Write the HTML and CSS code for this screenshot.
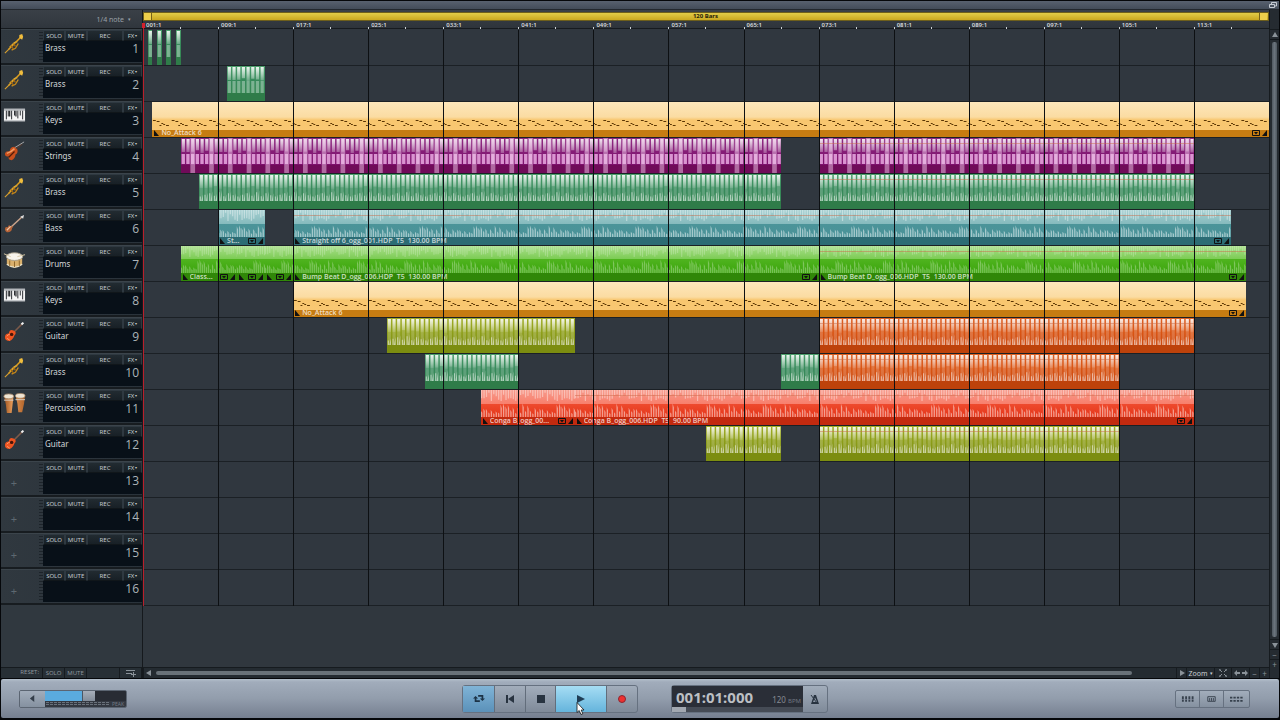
FILE: index.html
```html
<!DOCTYPE html>
<html lang="en">
<head>
<meta charset="utf-8">
<title>Arranger</title>
<link rel="stylesheet" href="styles.css">
</head>
<body>
<svg class="defs" aria-hidden="true">
  <defs>
    <linearGradient id="gold" x1="0" y1="0" x2="1" y2="1"><stop offset="0" stop-color="#f5c84a"/><stop offset="1" stop-color="#a96a08"/></linearGradient>
    <linearGradient id="skin" x1="0" y1="0" x2="1" y2="0"><stop offset="0" stop-color="#9a5220"/><stop offset=".4" stop-color="#e69a58"/><stop offset="1" stop-color="#b0632a"/></linearGradient>
    <linearGradient id="shade" x1="0" y1="0" x2="0" y2="1"><stop offset="0" stop-color="#fff" stop-opacity=".9"/><stop offset="1" stop-color="#fff" stop-opacity=".25"/></linearGradient>
    <symbol id="i-brass" viewBox="0 0 24 24">
      <path d="M2 22 L7 17" stroke="#d8a030" stroke-width="1.200"/>
      <path d="M6 18 L19 5" stroke="#e0a01e" stroke-width="1.600"/>
      <path d="M17 6 L17 3 L20 2 L21 5 L20 8 Z" fill="#f0bd3e"/>
      <path d="M7 16 L12 11 L15 10 M9 19 L13 17 L16 12" fill="none" stroke="url(#gold)" stroke-width="1.400"/>
      <path d="M8 14 L11 18 M11 12 L13 15" stroke="#a8690c" stroke-width="1.300"/>
    </symbol>
    <symbol id="i-keys" viewBox="0 0 24 24">
      <rect x="1" y="5" width="22" height="13" fill="#f4f4f4"/><path d="M1 5h22v2H1zM1 17h22v1H1z" fill="#b4b8bc"/>
      <path d="M3.500 7v9M5.500 7v6M9 7v9M12 7v5M15.500 7v8M18 7v5M20.500 7v9" stroke="#22262a" stroke-width="1"/>
      <path d="M7 7v6M13.500 7v6" stroke="#15171a" stroke-width="1.200"/>
    </symbol>
    <symbol id="i-strings" viewBox="0 0 24 24">
      <path d="M11 12 L20 4" stroke="#4a3a34" stroke-width="1.800"/><path d="M9 10 L22 2" stroke="#a7a9ab" stroke-width="1"/>
      <path d="M2 14 Q3 11 7 12 Q7 7 12 7 L15 10 Q16 14 13 15 Q13 19 9 21 Q5 21 6 17 Q2 18 2 14Z" fill="#c9501d"/>
      <path d="M4 14 Q8 13 12 9" stroke="#f19c63" stroke-width="1.500" fill="none"/><path d="M6 18 L12 12" stroke="#4e1c0a" stroke-width="1.200"/>
    </symbol>
    <symbol id="i-bass" viewBox="0 0 24 24">
      <path d="M7 17 L20 5" stroke="#c9a48c" stroke-width="1.600"/><path d="M18 5 L22 3 L21 7Z" fill="#dcdcdc"/>
      <path d="M2 18 Q2 15 5 16 Q6 12 8 15 L11 15 Q9 16 9 19 Q7 22 4 21 Q2 20 2 18Z" fill="#b46237"/><path d="M4 19 L8 15" stroke="#efc6a5" stroke-width="1.300"/>
    </symbol>
    <symbol id="i-drums" viewBox="0 0 24 24">
      <path d="M4 9v8q8 6 16 0V9z" fill="#d9b06c"/><ellipse cx="12" cy="9" rx="8.500" ry="4" fill="#f7f4ec" stroke="#a9a08b"/>
      <path d="M4 17q8 6 16 0" fill="none" stroke="#eee3c6" stroke-width="1.500"/><path d="M7 13v6M12 14v6M17 13v6" stroke="#8c642a" stroke-width="1"/>
      <path d="M1 6L8 9M23 7L15 9" stroke="#d7c9a6" stroke-width="1"/>
    </symbol>
    <symbol id="i-guitar" viewBox="0 0 24 24">
      <path d="M11 13 L20 4" stroke="#7b5a4a" stroke-width="1.600"/><path d="M18.500 4l2-2 1.500 1.500-2 2z" fill="#f0f0f0"/>
      <path d="M2 18 Q2 14 6 14 Q7 9 11 11 Q15 13 12 16 Q11 20 7 22 Q2 22 2 18Z" fill="#ee5420"/><circle cx="9" cy="15" r="1.800" fill="#4a1408"/>
      <path d="M4 19l3 2M4 17q1-2 3-2" stroke="#ff9a6a" stroke-width="1" fill="none"/>
    </symbol>
    <symbol id="i-perc" viewBox="0 0 24 24">
      <path d="M1 4h10l-1 9-1 9H4L3 13zM13 3h10l-1 9-2 9h-4l-1-9z" fill="url(#skin)"/>
      <ellipse cx="6" cy="4.500" rx="5" ry="2.500" fill="#eee4d3" stroke="#a9896a" stroke-width=".8"/><ellipse cx="18" cy="4" rx="5" ry="2.500" fill="#eee4d3" stroke="#a9896a" stroke-width=".8"/>
      <path d="M1 8.500h10M13 8h10" stroke="#d8cfc4" stroke-width="1"/>
    </symbol>
  </defs>
</svg>

<div class="app">
  <header class="titlebar"><button class="restore" aria-label="Restore window"><svg viewBox="0 0 10 8"><path d="M3.500 3V1.500h5V5H7M1.500 3.500h5v3h-5z" fill="none" stroke="#c5cad2"/></svg></button></header>

  <main class="workspace">
    <section class="tracks" aria-label="Tracks">
      <div class="snap"><button class="snap-btn">1/4 note <span class="caret">▾</span></button></div>
      <div id="heads"></div>
      <div class="filler"></div>
      <div class="reset-row">
        <span class="reset-label">RESET:</span><button>SOLO</button><button>MUTE</button><span class="blank"></span>
        <button aria-label="Add track"><svg viewBox="0 0 12 8"><path d="M1 1.500h9M1 4.500h6M6 5.500h5M8.500 3v5" stroke="#8a9299" fill="none"/></svg></button>
      </div>
    </section>

    <section class="timeline" aria-label="Arrangement">
      <div class="ruler">
        <div class="loop"><span class="grip"></span><span>120 Bars</span><span class="grip end"></span></div>
        <div class="marks" id="marks"></div>
      </div>
      <div class="lanes" id="lanes"></div>
      <div class="filler"></div>
      <div class="hscroll">
        <button class="arrow" aria-label="Scroll left"><svg viewBox="0 0 6 6"><path d="M5 0v6L0 3z" fill="#8a9299"/></svg></button>
        <div class="track"><span class="thumb"></span></div>
        <button class="arrow" aria-label="Scroll right"><svg viewBox="0 0 6 6"><path d="M1 0v6l5-3z" fill="#8a9299"/></svg></button>
        <button class="zoom">Zoom <span class="caret">▾</span></button>
        <button class="fit" aria-label="Fit"><svg viewBox="0 0 8 8"><path d="M0 2V0h2M6 0h2v2M8 6v2H6M2 8H0V6M1 1l2 2M7 1L5 3M1 7l2-2M7 7L5 5" stroke="#8a9299" fill="none"/></svg></button>
        <button class="wide" aria-label="Fit width"><svg viewBox="0 0 14 6"><path d="M0 3l3-3v2h3v2H3v2zM14 3l-3-3v2H8v2h3v2z" fill="#8a9299"/></svg></button>
        <button class="step">−</button><button class="step">+</button>
      </div>
    </section>

    <aside class="vscroll">
      <button aria-label="Scroll up"><svg viewBox="0 0 6 6"><path d="M0 5h6L3 0z" fill="#8a9299"/></svg></button>
      <div class="track"><span class="thumb"></span></div>
      <button aria-label="Scroll down"><svg viewBox="0 0 6 6"><path d="M0 1h6L3 6z" fill="#8a9299"/></svg></button>
      <button>−</button><button>+</button>
    </aside>
  </main>

  <footer class="transport">
    <div class="volume">
      <button class="speaker" aria-label="Mute output"><svg viewBox="0 0 8 8"><path d="M6 0v8L1 4z" fill="#333d49"/></svg></button>
      <div class="level"><input type="range" min="0" max="100" value="54" aria-label="Volume"><div class="meter"><span class="dots"></span><span>PEAK</span></div></div>
    </div>
    <div class="center">
      <div class="buttons">
        <button class="loop-btn" aria-label="Loop"><svg viewBox="0 0 14 10"><path d="M0 5L3 2l3 3H4v2h4v2H2V5zM14 5l-3 3-3-3h2V3H6V1h6v4z" fill="#1c3346"/></svg></button>
        <button aria-label="To start"><svg viewBox="0 0 10 10"><path d="M1 1h2v8H1zM9 1v8L3 5z" fill="#283340"/></svg></button>
        <button aria-label="Stop"><svg viewBox="0 0 10 10"><path d="M1 1h8v8H1z" fill="#283340"/></svg></button>
        <button class="play" aria-label="Play"><svg viewBox="0 0 10 10"><path d="M1 1v8l8-4z" fill="#1f3d55"/></svg></button>
        <button aria-label="Record"><svg viewBox="0 0 10 10"><circle cx="5" cy="5" r="3.500" fill="#ee3030" stroke="#8b2630"/></svg></button>
        <svg class="cursor" viewBox="0 0 9 13"><path d="M1 .5v10l2.200-2 1.800 4 1.800-.8L5.200 8H8z" fill="#fff" stroke="#111" stroke-width=".8"/></svg>
      </div>
      <div class="clock">
        <div class="display">
          <div class="readout"><span class="time">001:01:000</span><span class="bpm">120 <small>BPM</small></span></div>
          <div class="seek"><span></span></div>
        </div>
        <button aria-label="Metronome"><svg viewBox="0 0 10 12"><path d="M4 2h2l3 9H1z M5 4.500L3 9h4z" fill="#283340" fill-rule="evenodd"/><path d="M1 2l6 8" stroke="#283340"/></svg></button>
      </div>
    </div>
    <div class="views">
      <button aria-label="Keyboard"><svg viewBox="0 0 14 8"><path d="M1 1h2v6H1zM4.500 1h2v6h-2zM8 1h2v6H8zM11.500 1h2v6h-2z" fill="#37414d"/><path d="M0 4.500h14" stroke="#8d97a6" stroke-width=".6"/></svg></button>
      <button aria-label="Mixer"><svg viewBox="0 0 14 8"><path d="M3 1.500h8v5H3zM5 3v3M7 3v3M9 3v3" fill="none" stroke="#37414d"/></svg></button>
      <button aria-label="Media"><svg viewBox="0 0 14 8"><path d="M0 2.500h14M0 6h14" stroke="#37414d" stroke-width="2" stroke-dasharray="2.500 1.200"/></svg></button>
    </div>
  </footer>
</div>
<script src="app.js"></script>
</body>
</html>
```

FILE: styles.css
```css
* { box-sizing: border-box; }
body { margin: 0; background: #05070a; font-family: "Noto Sans", "Open Sans", sans-serif; color: #c9ced3; }
button { margin: 0; padding: 0; border: 0; background: none; color: inherit; font: inherit; display: flex; align-items: center; justify-content: center; }
svg { display: block; }
.defs { position: absolute; width: 0; height: 0; }

.app { min-height: 100vh; display: flex; flex-direction: column; padding: 1px 1px 2px; }
.titlebar { height: 8px; display: flex; justify-content: flex-end; background: linear-gradient(#58616f, #434c59); padding-right: 1px; }
.restore svg { width: 10px; height: 8px; }

.workspace { flex: 1; display: grid; grid-template-columns: 142px 1fr 10px; background: #30373e; border-top: 1px solid #23282e; }
.tracks, .timeline, .vscroll { display: flex; flex-direction: column; min-width: 0; }
.filler { flex: 1; }

/* track heads */
.tracks { background: #30383f; border-right: 1px solid #15191d; }
.snap { height: 19px; background: linear-gradient(#3a4047, #30363d); border-bottom: 1px solid #15191d; display: flex; justify-content: flex-end; padding-right: 11px; }
.snap-btn { font-size: 7px; color: #9ba1a8; gap: 4px; }
.caret { font-size: 5px; }
.head { height: 36px; display: flex; border-bottom: 2px solid #171c20; border-top: 1px solid #3b444b; background: linear-gradient(90deg, #30383f, #29323a); padding-bottom: 1px; }
.pic { width: 26px; margin: 0 12px 5px 0; display: flex; align-items: center; justify-content: center; }
.pic svg { width: 23px; height: 23px; }
.pic.empty { color: #5d6870; font-size: 11px; margin: 8px 12px 0 0; }
.drag { width: 4px; margin: 2px 0; background: repeating-linear-gradient(#1d242a 0 1px, transparent 1px 3px); }
.panel { flex: 1; background: #081018; display: flex; flex-direction: column; }
.keys { display: grid; grid-template-columns: 22px 22px 36px 1fr; height: 11px; }
.keys button { background: linear-gradient(#222b31, #182026); border: 1px solid #2f3941; border-bottom-color: #10161a; font-size: 6px; line-height: 8px; color: #c4cace; gap: 1px; }
.keys .caret { font-size: 4px; }
.title { display: flex; justify-content: space-between; padding: 0 3px 0 2px; }
.name { font-size: 8px; line-height: 13px; color: #d4d8da; }
.num { font-family: "Open Sans", sans-serif; font-size: 12px; line-height: 15px; color: #adb4b9; }
.reset-row { height: 11px; display: grid; grid-template-columns: 42px 22px 22px 33px 1fr; font-size: 6px; line-height: 9px; color: #8b949b; background: #272f35; border-top: 1px solid #161b1f; }
.reset-row > * { border-right: 1px solid #161b1f; }
.reset-label { text-align: right; padding-right: 3px; }
.reset-row svg { width: 12px; height: 8px; }

/* ruler */
.ruler { height: 19px; padding-top: 2px; background: linear-gradient(#3a4047, #2e343b); border-bottom: 1px solid #171b1f; }
.loop { height: 9px; display: flex; justify-content: space-between; align-items: center; background: linear-gradient(#e2cc48, #c9a720); border: 1px solid #6e5f1c; font-size: 6px; font-weight: 700; line-height: 7px; color: #282309; padding-right: 1px; }
.grip { width: 8px; height: 7px; background: #edcf4b; border-right: 1px solid #75621a; }
.grip.end { border-right: 0; border-left: 1px solid #75621a; }
.marks { display: grid; grid-template-columns: repeat(15, 1fr); height: 8px; }
.mark { font-size: 6px; font-weight: 600; line-height: 8px; color: #d5d9dd; padding-left: 3px; background: linear-gradient(#cbd0d5, #cbd0d5) left bottom / 1px 2px no-repeat, linear-gradient(#cbd0d5, #cbd0d5) center bottom / 1px 2px no-repeat; }

/* lanes */
.lanes { position: relative; border-top: 1px solid #30373f; }
.lane { position: relative; height: 36px; border-bottom: 1px solid #1b2025; background: #30373f; }
.grid { position: absolute; inset: 0; display: grid; grid-template-columns: repeat(15, 1fr); pointer-events: none; }
.grid span + span { border-left: 1px solid #0d1013; }
.playhead { position: absolute; top: -7px; bottom: 0; left: 0; width: 1px; background: #b9202c; }
.playhead::before { content: ""; position: absolute; top: 0; left: -1px; width: 3px; height: 5px; background: #d4202c; }
.clip { position: absolute; top: 0; height: 35px; overflow: hidden; }
.wave { position: absolute; inset: 0; width: 100%; height: 100%; }
.tag { position: absolute; left: 0; right: 0; bottom: 0; height: 8px; display: flex; align-items: center; gap: 2px; padding: 0 2px; font-family: "Open Sans", sans-serif; font-size: 7px; font-weight: 600; line-height: 8px; white-space: pre; color: rgba(255, 255, 255, .75); }
.tag .text { flex: 1; min-width: 0; overflow: hidden; }
.tag svg { flex: none; height: 6px; }
.tri { width: 5px; }
.menu { width: 8px; }

.clip-green, .clip-mint { background: linear-gradient(#4c9e6c 0, #36895a 15px, #368955 27px, #2f7c49 27px); }
.clip-purple { background: linear-gradient(#8e2a82 0, #7d0f6c 27px, #700b59 27px); }
.clip-teal { background: linear-gradient(#a5cfd1 0, #85babd 14px, #4b9499 14px, #4a9298 27px, #2c6c74 27px); }
.clip-lime { background: linear-gradient(#aadf8c 0, #7ccc54 13px, #50b41f 13px, #3ba40c 27px, #308708 27px); }
.clip-keys { background: linear-gradient(#fde6bb 0, #fbdca2 15px, #f8c66e 18px, #f9c873 28px, #c67c12 28px); }
.clip-olive { background: linear-gradient(#a0ad28 0, #8d9e18 14px, #7f9014 27px, #7c8d10 27px); }
.clip-orange { background: linear-gradient(#dc6024 0, #d95413 14px, #cc480e 27px, #bd420b 27px); }
.clip-red { background: linear-gradient(#f79a8b 0, #f87f6c 14px, #ee4a2e 14px, #e43619 27px, #c32a0f 27px); }

/* scroll bars */
.hscroll { height: 11px; display: flex; align-items: stretch; background: #242b31; border-top: 1px solid #161b1f; }
.hscroll button { border-left: 1px solid #161b1f; }
.arrow { width: 10px; }
.arrow svg, .vscroll svg { width: 6px; height: 6px; }
.hscroll .track { flex: 1; padding: 3px 3px; }
.hscroll .thumb { display: block; width: 96%; height: 4px; border-radius: 2px; background: #697279; }
.zoom { width: 28px; font-size: 7px; gap: 2px; }
.fit { width: 17px; } .fit svg { width: 8px; height: 8px; }
.wide { width: 18px; } .wide svg { width: 14px; height: 6px; }
.step { width: 10px; font-size: 8px; line-height: 9px; color: #8a9299; }
.vscroll { background: #252b31; border-left: 1px solid #161b1f; padding: 19px 0 9px; }
.vscroll .track { flex: 1; padding: 2px 2px 2px; display: flex; border-top: 1px solid #11161a; }
.vscroll .thumb { flex: 1; border-radius: 2px; background: linear-gradient(90deg, #505961, #6a737c, #505961); }
.vscroll button { height: 10px; font-size: 8px; line-height: 8px; color: #8a9299; border-top: 1px solid #161b1f; }

/* transport */
.transport { margin-top: 1px; height: 39px; display: grid; grid-template-columns: 1fr auto 1fr; align-items: center; padding: 0 8px 0 18px; background: linear-gradient(#b3bfcb 0, #a1acbb 3px, #929dac 50%, #757f90); border-radius: 2px; }
.volume { display: flex; width: 108px; height: 18px; border: 1px solid #5b6572; border-radius: 2px; overflow: hidden; }
.speaker { width: 25px; background: linear-gradient(#a2adbb, #8591a0); }
.speaker svg { width: 7px; height: 7px; }
.level { flex: 1; background: #333841; display: flex; flex-direction: column; }
.level input { appearance: none; width: 100%; height: 10px; margin: 0; background: linear-gradient(90deg, #5aabde 50%, #282c34 50%); }
.level input::-webkit-slider-thumb { appearance: none; width: 13px; height: 10px; background: linear-gradient(#a7afba, #838d9a); border: 0; border-left: 1px solid #4b5663; }
.meter { display: flex; align-items: center; gap: 2px; font-size: 5px; line-height: 6px; color: #737b85; padding: 0 2px 0 1px; }
.dots { flex: 1; height: 5px; background: repeating-linear-gradient(#333841 0 1px, transparent 1px 2px), repeating-linear-gradient(90deg, #69717b 0 3px, #333841 3px 4px); }
.center { display: flex; gap: 33px; }
.buttons { position: relative; display: grid; grid-template-columns: 31px 31px 30px 51px 31px; height: 28px; border: 1px solid #667180; border-radius: 3px; background: linear-gradient(#a2adbb, #7f8a99); }
.buttons button + button { border-left: 1px solid #626d7b; }
.buttons button svg { width: 10px; height: 10px; }
.buttons .loop-btn { background: linear-gradient(#80b4d7, #5b91b9); }
.buttons .loop-btn svg { width: 12px; height: 9px; }
.buttons .play { background: linear-gradient(#a6ddf4, #65b4dc); }
.cursor { position: absolute; left: 113px; top: 16px; width: 9px; height: 13px; }
.clock { display: flex; height: 28px; border: 1px solid #667180; border-radius: 3px; background: linear-gradient(#a2adbb, #7f8a99); }
.clock > button { width: 24px; }
.clock > button svg { width: 10px; height: 12px; }
.display { width: 131px; background: #2a2e37; display: flex; flex-direction: column; }
.readout { flex: 1; display: flex; justify-content: space-between; align-items: center; padding: 1px 2px 0 4px; }
.time { font-size: 15px; line-height: 20px; font-weight: 700; color: #bcbfc3; }
.bpm { font-size: 8px; padding-top: 6px; color: #858a92; }
.bpm small { font-size: 6px; color: #727882; }
.seek { height: 5px; background: #454b55; }
.seek span { display: block; width: 14px; height: 5px; background: #a2a8b1; }
.views { justify-self: end; margin-right: 21px; display: flex; height: 18px; border: 1px solid #667180; border-radius: 2px; background: linear-gradient(#a2adbb, #8591a0); }
.views button { width: 24px; border-right: 1px solid #667180; }
.views button:last-child { width: 25px; border-right: 0; }
.views svg { width: 13px; height: 8px; }
```

FILE: app.js
```js
const BARS = 120;
// each clip: kind, first bar, last bar, label, automation line
const BASS_LOOP = "Straight off 6_ogg_001.HDP  T5  130.00 BPM";
const DRUM_LOOP = "Bump Beat D_ogg_006.HDP  T5  130.00 BPM";
const tracks = [
  ["Brass", "brass", [["mint", .5, 1], ["mint", 1.5, 2], ["mint", 2.5, 3], ["mint", 3.5, 4]]],
  ["Brass", "brass", [["mint", 9, 13]]],
  ["Keys", "keys", [["keys", 1, 120, "No_Attack 6"]]],
  ["Strings", "strings", [["purple", 4, 68], ["purple", 72, 112, "", 1]]],
  ["Brass", "brass", [["green", 6, 68], ["green", 72, 112, "", 1]]],
  ["Bass", "bass", [["teal", 8, 13, "St..."], ["teal", 16, 116, BASS_LOOP, 1]]],
  ["Drums", "drums", [["lime", 4, 10, "Class..."], ["lime", 10, 13, " "], ["lime", 13, 16, " "], ["lime", 16, 72, DRUM_LOOP], ["lime", 72, 117.5, DRUM_LOOP, 1]]],
  ["Keys", "keys", [["keys", 16, 117.5, "No_Attack 6"]]],
  ["Guitar", "guitar", [["olive", 26, 46], ["orange", 72, 112, "", 1]]],
  ["Brass", "brass", [["green", 30, 40], ["green", 68, 72], ["orange", 72, 104, "", 1]]],
  ["Percussion", "perc", [["red", 36, 46, "Conga B_ogg_00..."], ["red", 46, 112, "Conga B_ogg_006.HDP  T5  90.00 BPM", 1]]],
  ["Guitar", "guitar", [["olive", 60, 68], ["olive", 72, 104, "", 1]]],
  [], [], [], []
];

const noise = i => { const v = Math.sin(i * 127.1 + 11.7) * 43758.5453; return v - Math.floor(v); };
const path = (d, fill, o) => `<path d="${d}" fill="${fill}" fill-opacity="${o}"/>`;

// wave units: ten per bar across, thirty-five down
function wave(kind, bars) {
  const w = bars * 10;
  let top = "", mid = "", low = "", gaps = "";
  if (kind === "keys") {
    for (let x = 0; x < w; x += 20) {
      for (const [dx, y, l] of [[1, 18, 3], [5, 19, 3], [8, 23, 2], [10, 21, 2], [12, 22, 2], [15, 23, 3]]) {
        if (x + dx + l < w) low += `M${x + dx} ${y}h${l}v1h-${l}z`;
      }
    }
    return path(low, "#5a3503", 1);
  }
  if (["teal", "lime", "red"].includes(kind)) {
    const step = { teal: 2.5, lime: 2.2, red: 2.6 }[kind];
    for (let x = 0, i = 0; x < w; x += step, i++) {
      const n = i % 23, a = 2 + noise(n) * 9, b = 3 + noise(n + 40) * (kind === "teal" ? 9 : 11);
      top += `M${x} 0h1.300v${a}h-1.300z`;
      low += `M${x} 27v-${b}l1.400 ${b * .3}v${b * .7}z`;
    }
    return path(top, "#fff", kind === "lime" ? .22 : .4) + path(low, "#fff", kind === "lime" ? .3 : .5);
  }
  for (let x = 0, i = 0; x < w; x += 5, i++) {
    const a = 12 + noise(i % 8) * 3, b = 4 + noise(i % 8 + 20) * 5;
    top += `M${x + .8} 1h3.400v${a - 1}h-3.400z`;
    if (kind === "mint") mid += `M${x + .8} 15h3.400v12h-3.400z`;
    else if (kind === "purple") {
      mid += `M${x + .6} 16h3.600v10h-3.600z`;
      if (i % 4 === 2) gaps += `M${x} 0h5v35h-5z`;
    } else {
      mid += `M${x + .8} ${a}h3.400v${27 - a}h-3.400z`;
      low += `M${x + .8} 27v-${b}h1.200v${b}zM${x + 2.4} 27l1.800 -${b + 2}v${b + 2}z`;
    }
  }
  const strong = kind === "purple";
  return path(top, "url(#shade)", 1)
    + path(mid, strong ? "#f0b4e8" : "#fff", strong ? .8 : kind === "mint" ? .35 : .2)
    + path(low, "#fff", .5) + path(gaps, "#f0c8ea", .5);
}

const TRI_L = '<svg class="tri" viewBox="0 0 5 6"><path d="M0 0v6h5z" fill="#111"/></svg>';
const TRI_R = '<svg class="tri" viewBox="0 0 5 6"><path d="M5 0v6H0z" fill="#111"/></svg>';
const MENU = '<svg class="menu" viewBox="0 0 8 6"><path d="M.5.5h7v5h-7z" fill="none" stroke="#111"/><path d="M2 2h4L4 4.500z" fill="#111"/></svg>';

function clip([kind, from, to, label, line]) {
  const bars = to - from;
  const auto = line ? `<path d="M0 5.500H${bars * 10}" stroke="#c96a48" stroke-opacity=".5"/>` : "";
  const tag = label ? `<div class="tag">${TRI_L}<span class="text">${label}</span>${MENU}${TRI_R}</div>` : "";
  return `<div class="clip clip-${kind}" style="left:${from / BARS * 100}%;width:${bars / BARS * 100}%">
    <svg class="wave" viewBox="0 0 ${bars * 10} 35" preserveAspectRatio="none">${wave(kind, bars)}${auto}</svg>${tag}</div>`;
}

document.getElementById("heads").innerHTML = tracks.map(([name, icon], i) => `<div class="head">
  ${icon ? `<div class="pic"><svg><use href="#i-${icon}"/></svg></div>` : '<div class="pic empty">+</div>'}<div class="drag"></div>
  <div class="panel"><div class="keys"><button>SOLO</button><button>MUTE</button><button>REC</button><button>FX<span class="caret">▾</span></button></div>
  <div class="title"><span class="name">${name || ""}</span><span class="num">${i + 1}</span></div></div></div>`).join("");

document.getElementById("lanes").innerHTML =
  tracks.map(t => `<div class="lane">${(t[2] || []).map(clip).join("")}</div>`).join("") +
  `<div class="grid">${"<span></span>".repeat(15)}</div><div class="playhead"></div>`;

document.getElementById("marks").innerHTML =
  Array.from({ length: 15 }, (_, i) => `<span class="mark">${String(i * 8 + 1).padStart(3, "0")}:1</span>`).join("");
```
